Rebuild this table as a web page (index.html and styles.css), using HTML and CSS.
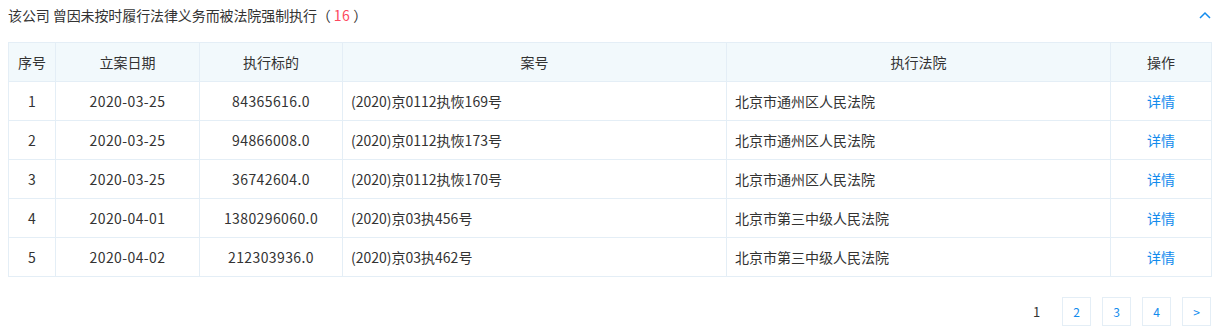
FILE: index.html
```html
<!DOCTYPE html>
<html lang="zh">
<head>
<meta charset="utf-8">
<link rel="stylesheet" href="styles.css">
</head>
<body>
<div class="panel">
  <div class="title-bar">
    <div class="title">该公司 曾因未按时履行法律义务而被法院强制执行（ <span class="count">16</span> ）</div>
    <svg class="chev" width="14" height="10" viewBox="0 0 14 10"><path d="M2 8 L7 3 L12 8" fill="none" stroke="#128bed" stroke-width="1.5"/></svg>
  </div>
  <table class="grid">
    <colgroup>
      <col class="c1"><col class="c2"><col class="c3"><col class="c4"><col class="c5"><col class="c6">
    </colgroup>
    <thead>
      <tr><th>序号</th><th>立案日期</th><th>执行标的</th><th>案号</th><th>执行法院</th><th>操作</th></tr>
    </thead>
    <tbody>
      <tr><td class="ctr">1</td><td class="ctr num">2020-03-25</td><td class="ctr num">84365616.0</td><td>(2020)京0112执恢169号</td><td>北京市通州区人民法院</td><td class="ctr"><a class="link">详情</a></td></tr>
      <tr><td class="ctr">2</td><td class="ctr num">2020-03-25</td><td class="ctr num">94866008.0</td><td>(2020)京0112执恢173号</td><td>北京市通州区人民法院</td><td class="ctr"><a class="link">详情</a></td></tr>
      <tr><td class="ctr">3</td><td class="ctr num">2020-03-25</td><td class="ctr num">36742604.0</td><td>(2020)京0112执恢170号</td><td>北京市通州区人民法院</td><td class="ctr"><a class="link">详情</a></td></tr>
      <tr><td class="ctr">4</td><td class="ctr num">2020-04-01</td><td class="ctr num">1380296060.0</td><td>(2020)京03执456号</td><td>北京市第三中级人民法院</td><td class="ctr"><a class="link">详情</a></td></tr>
      <tr><td class="ctr">5</td><td class="ctr num">2020-04-02</td><td class="ctr num">212303936.0</td><td>(2020)京03执462号</td><td>北京市第三中级人民法院</td><td class="ctr"><a class="link">详情</a></td></tr>
    </tbody>
  </table>
  <div class="pager">
    <span class="page current">1</span>
    <span class="page box">2</span>
    <span class="page box">3</span>
    <span class="page box">4</span>
    <span class="page box">&gt;</span>
  </div>
</div>
</body>
</html>
```
FILE: styles.css
```css
html, body {
  margin: 0;
  padding: 0;
  background: #fff;
}
body {
  font-family: "Microsoft YaHei", "Noto Sans CJK SC", "Noto Sans", sans-serif;
  font-size: 14px;
  color: #333;
}
.panel {
  padding: 0 14px 0 8px;
  width: 1203px;
}
.title-bar {
  display: flex;
  align-items: center;
  justify-content: space-between;
  height: 30px;
  margin-bottom: 12px;
}
.title {
  font-size: 14px;
  color: #333;
  letter-spacing: -0.1px;
}
.count {
  color: #fd485e;
  letter-spacing: 0.4px;
}
.chev {
  margin-right: -1px;
}
.grid {
  width: 1203px;
  border-collapse: collapse;
  table-layout: fixed;
}
.c1 { width: 47px; }
.c2 { width: 144px; }
.c3 { width: 143px; }
.c4 { width: 384px; }
.c5 { width: 384px; }
.c6 { width: 101px; }
.grid th, .grid td {
  border: 1px solid #e4eef6;
  height: 38px;
  padding: 0 8px;
  font-weight: normal;
  text-align: left;
  white-space: nowrap;
}
.grid th {
  background: #f2f9fc;
  text-align: center;
}
.grid td.ctr {
  text-align: center;
}
.grid td.num {
  letter-spacing: 0.4px;
}
.link {
  color: #128bed;
  text-decoration: none;
}
.pager {
  display: flex;
  justify-content: flex-end;
  align-items: center;
  gap: 11px;
  margin-top: 20px;
}
.page {
  width: 29px;
  height: 29px;
  box-sizing: border-box;
  display: flex;
  align-items: center;
  justify-content: center;
  font-size: 13px;
}
.page.current {
  color: #333;
}
.page.box {
  border: 1px solid #e4eef6;
  color: #128bed;
  font-size: 12px;
}
```
